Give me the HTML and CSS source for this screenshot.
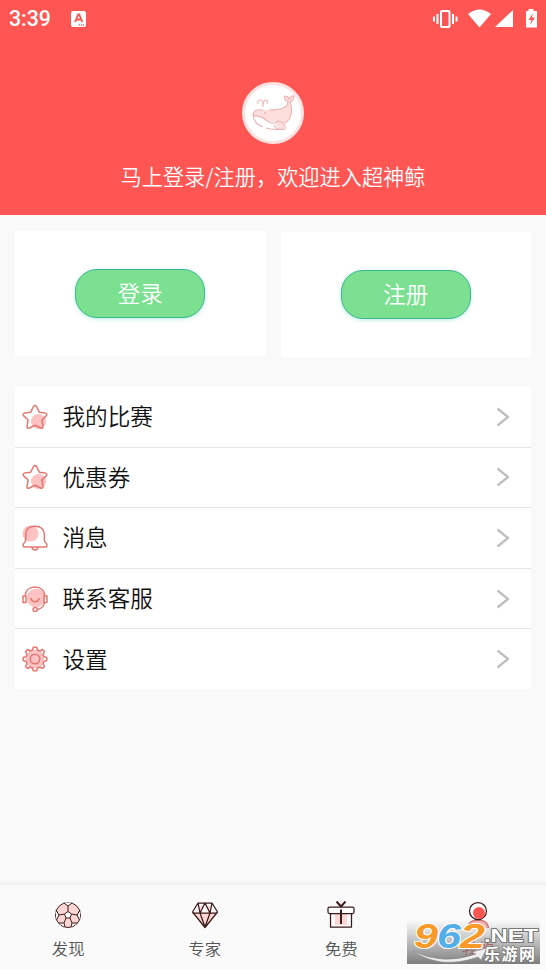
FILE: index.html
```html
<!DOCTYPE html>
<html lang="zh-CN">
<head>
<meta charset="utf-8">
<title>我的</title>
<link rel="stylesheet" href="styles.css">
</head>
<body>
<svg class="defs" aria-hidden="true">
  <symbol id="star" viewBox="0 0 26 26">
    <circle cx="16.500" cy="17.500" r="7.500" fill="#ffc2c2" stroke="none"/>
    <path d="M11.500 2.500Q13 .5 14.500 2.500L17.300 8.200L23.500 9.100Q25.800 9.800 24.200 11.900L19.900 16L21 22.400Q20.700 25 18.600 24L13 21.300L7.400 24Q5 25 5 22.400L6.100 16L1.700 11.900Q.2 9.800 2.500 9.100L8.700 8.200Z"/>
  </symbol>
  <symbol id="chevron" viewBox="0 0 14 20"><path d="M1.500 1.500L12 10L1.500 18.500" fill="none" stroke="#bfbfbf" stroke-width="2.3"/></symbol>
</svg>
<div class="app">
  <header class="hero">
    <div class="status">
      <span class="clock">3:39</span>
      <svg class="badge" viewBox="0 0 15 16"><rect width="15" height="16" rx="2" fill="#fff"/><path d="M4 11L7.200 3.500h1L11.300 11M5.300 8.500h4.700" fill="none" stroke="#ff5654" stroke-width="1.8"/><path d="M8 14h1m1 0h1m1 0h1" stroke="#ff5654" stroke-width="1.3"/></svg>
      <svg class="signals" viewBox="0 0 106 22" fill="#fff"><g fill="none" stroke="#fff" stroke-width="2"><rect x="8" y="2" width="8.500" height="16" rx="1"/><path d="M1 7.500v5M4.500 5v10M20 5v10M23.500 7.500v5"/></g><path d="M35 5Q46.500-4 58 5L46.500 18.500ZM80 1V18H62ZM93 2h2.500V0h5v2H104V18.500H93Z"/><path d="M100 4L95.500 11h3l-1.500 5 5-7.500h-3.200z" fill="#ff5654"/></svg>
    </div>
    <svg class="avatar" viewBox="0 0 62 62"><circle cx="31" cy="31" r="29.500" fill="#fff" stroke="#fde2e1" stroke-width="3"/><path d="M11 32C12 27 20 28 27 28C36 27 46 27 46 19C41 16 42 14 43 14Q46 14 47 17Q49 13 52 14Q52 19 48 20C51 29 50 36 43 41Q44 47 37 47Q32 43 36 39C28 42 21 34 11 34Z" fill="#fcdedd"/><path d="M21 28C13 27 11 30 11 33Q12 42 21 45M11 34Q18 33 24 38Q31 44 36 39Q44 40 43 47Q35 49 32 43M24 46Q29 48 42 47M27 28C36 28 46 27 46 20Q41 17 43 14Q46 14 47 17Q49 13 52 14Q52 19 48 20C51 28 50 37 43 41M16 22Q15 18 19 18Q21 18 21 25Q21 18 24 18Q26 18 25 22" fill="none" stroke="#edb5b3" stroke-width="1.100"/><circle cx="23" cy="31" r="1" fill="#edb5b3"/></svg>
    <p class="greeting">马上登录/注册，欢迎进入超神鲸</p>
  </header>
  <main class="content">
    <section class="actions">
      <div class="panel"><button class="pill">登录</button></div>
      <div class="panel panel-low"><button class="pill">注册</button></div>
    </section>
    <nav class="menu">
      <a class="row"><svg class="icon"><use href="#star"/></svg><span>我的比赛</span><svg class="arrow"><use href="#chevron"/></svg></a>
      <a class="row"><svg class="icon"><use href="#star"/></svg><span>优惠券</span><svg class="arrow"><use href="#chevron"/></svg></a>
      <a class="row"><svg class="icon" viewBox="0 0 26 26"><circle cx="8.500" cy="8.500" r="8" fill="#ffc2c2" stroke="none"/><path d="M3.700 15V10C3.700 4 7 1.200 13 1.200S22.300 4 22.300 10V15Q22.300 17 24.800 19V21Q24.800 22 23.500 22H2.500Q1.200 22 1.200 21V19Q3.700 17 3.700 15ZM10 22.300Q10.500 25 13 25T16 22.300"/></svg><span>消息</span><svg class="arrow"><use href="#chevron"/></svg></a>
      <a class="row"><svg class="icon" viewBox="0 0 26 26"><circle cx="14" cy="12" r="9.300" fill="#ffc2c2" stroke="none"/><path d="M3 10C3.500 5 7 1 13 1S22.500 5 23 10M1 10h3v6.500h-3zM22 10h3v6.500h-3zM8.800 12Q9.500 15.700 13 15.700T17.200 12M22.500 16.500Q22 22 15.500 23.500"/><circle cx="13.200" cy="23.500" r="2.100" fill="#fff"/></svg><span>联系客服</span><svg class="arrow"><use href="#chevron"/></svg></a>
      <a class="row"><svg class="icon" viewBox="0 0 26 26"><circle cx="13" cy="13" r="9.500" fill="#ffc2c2" stroke="none"/><path d="M10.500 4L11.300 1.200H14.700L15.500 4L18 5L20.500 3.500L22.500 5.500L21 8.500L22 10.700L24.800 11.500V14.500L22 15.400L21 17.800L22.500 20.500L20.500 22.500L18 21L15.500 22L14.700 24.800H11.300L10.500 22L8 21L5.500 22.500L3.500 20.500L5 17.800L4 15.400L1.200 14.500V11.500L4 10.700L5 8.500L3.500 5.500L5.500 3.500L8 5Z"/><circle cx="13" cy="13" r="4.800"/></svg><span>设置</span><svg class="arrow"><use href="#chevron"/></svg></a>
    </nav>
  </main>
  <footer class="tabs">
    <a class="tab"><svg class="ball" viewBox="0 0 28 28"><circle cx="14" cy="14" r="12.500" fill="#ffd6d3"/><path d="M10 1.500L14 5L18 1.500ZM1.500 10L5 14L2.500 19ZM26.500 10L23 14L25.500 19ZM5 22.500L10 22L11 26ZM23 22.500L18 22L17 26ZM14 10.500L17.500 13L16 17H12L10.500 13Z" fill="#fff" stroke="none"/><path d="M10 2L14 5L18 2M14 5V10.500M14 10.500L17.500 13L16 17H12L10.500 13ZM10.500 13L5 14L2 9M5 14L2.500 19M17.500 13L23 14L26 9M23 14L25.500 19M12 17L10 22L5 22M10 22L11 26M16 17L18 22H23M18 22L17 26"/></svg><span>发现</span></a>
    <a class="tab"><svg viewBox="0 0 28 28"><path d="M2 12H26L14 26Z M7 5L10 12L14 3L18 12L21 5" fill="#ffd6d3" stroke="none"/><path d="M7 2H21L26.500 11L14 26.500L1.500 11ZM1.500 12H26.500M7 2L9 12L14 26L19 12L21 2M9 12L14 2L19 12"/></svg><span>专家</span></a>
    <a class="tab"><svg viewBox="0 0 28 28"><path d="M8 11H20V24H8Z" fill="#ffd6d3" stroke="none"/><path d="M3.500 12.500V26H24.500V12.500"/><rect x="1" y="6" width="26" height="6.500" rx="1.500" fill="#fff"/><path d="M9.500 .5L14 5.500L18.500 .5M14 8.500V23" stroke-width="2"/></svg><span>免费</span></a>
    <a class="tab current"><svg viewBox="0 0 28 28"><path d="M3.500 27Q4 19 14 19T24.500 27" fill="#ffb6b4" stroke="#c56f6c"/><circle cx="14" cy="10" r="8.500" fill="#fff"/><circle cx="15" cy="12" r="6" fill="#ff5654" stroke="none"/></svg><span>我的</span></a>
  </footer>
  <svg class="watermark" viewBox="0 0 134 46">
    <defs><linearGradient id="shade" x2="0" y2="1"><stop stop-color="#777" stop-opacity="0"/><stop offset="1" stop-color="#707070" stop-opacity=".9"/></linearGradient></defs>
    <rect width="133" height="44" fill="url(#shade)"/>
    <path d="M6 31Q36 46 69 34L65 32L80 28L74 40L71 37Q33 50 6 31Z" fill="#eee" stroke="#888" stroke-width=".5"/>
    <g class="digits"><text x="7" y="28" textLength="24" lengthAdjust="spacingAndGlyphs" fill="#f79a27">9</text><text x="30" y="28" textLength="24" lengthAdjust="spacingAndGlyphs" fill="#54aee8">6</text><text x="53" y="28" textLength="25" lengthAdjust="spacingAndGlyphs" fill="#f79a27">2</text></g>
    <text class="net" x="77" y="21.500" textLength="54" lengthAdjust="spacingAndGlyphs">.NET</text>
    <text class="site" x="77" y="39.500" textLength="51">乐游网</text>
  </svg>
</div>
</body>
</html>
```
FILE: styles.css
```css
* { box-sizing: border-box; }
body { margin: 0; background: #f9f9f9; font-family: "Noto Sans CJK SC", sans-serif; font-weight: 350; }
.defs { position: absolute; width: 0; height: 0; }
.app { position: relative; display: flex; flex-direction: column; height: 970px; overflow: hidden; }
.hero { display: flex; flex-direction: column; align-items: center; height: 215px; background: #ff5654; color: #fff; }
.status { display: flex; align-items: center; width: 100%; height: 38px; padding: 0 7px 0 9px; }
.clock { width: 62px; font: 500 21.3px/38px Roboto, sans-serif; }
.badge { width: 15px; height: 16px; }
.signals { width: 106px; height: 22px; margin: 1px 0 0 auto; overflow: visible; }
.avatar { width: 62px; height: 62px; margin-top: 44px; }
.greeting { margin: 16px 0 0; font-size: 21.2px; line-height: 32px; }
.content { flex: 1; padding: 16px 15px 0; }
.actions { display: grid; grid-template-columns: 1fr 1fr; gap: 15px; height: 127px; }
.panel { display: flex; align-items: center; justify-content: center; height: 125px; background: #fff; }
.panel-low { margin-top: 1.4px; }
.pill { width: 130px; height: 49px; padding: 0 0 2px; border: 1px solid #37b793; border-radius: 22px; background: #7be191; box-shadow: 0 1px 4px #b8eedd; color: #fff; font: inherit; font-size: 22.5px; line-height: 43px; }
.menu { margin-top: 29px; background: #fff; }
.row { display: flex; align-items: center; height: 60.6px; padding: 0 21px 0 7px; border-bottom: 1px solid #e5e5e5; color: #111; font-size: 22.6px; }
.row:last-child { height: 60px; border-bottom: 0; }
.row span { margin-left: 14.5px; padding-bottom: 1px; line-height: 34px; }
.icon { width: 26px; height: 26px; fill: none; stroke: #e67770; stroke-width: 1.5; stroke-linejoin: round; }
.arrow { width: 14px; height: 20px; margin-left: auto; }
.tabs { display: grid; grid-template-columns: repeat(4, 1fr); height: 88px; border-top: 3px solid #f2f2f2; background: #fafafa; }
.tab { display: flex; flex-direction: column; align-items: center; padding-top: 16px; color: #555; font-size: 16.4px; line-height: 24px; }
.tab svg { width: 28px; height: 28px; margin-bottom: 7px; fill: none; stroke: #3a1b1b; stroke-width: 1.25; stroke-linejoin: round; }
.tab .ball { stroke-width: 1; }
.current { color: #e35b57; }
.watermark { position: absolute; left: 407px; top: 920px; width: 134px; height: 46px; overflow: visible; }
.watermark text { paint-order: stroke; stroke-linejoin: round; }
.digits { font: italic 700 35px "Liberation Sans", sans-serif; stroke: #fff; stroke-width: 2px; }
.net { font: 700 19px "Liberation Sans", sans-serif; fill: #fff; stroke: #777; stroke-width: 2px; }
.site { font-size: 16px; font-weight: 700; fill: #fff; stroke: #777; stroke-width: 1.500px; }
```
